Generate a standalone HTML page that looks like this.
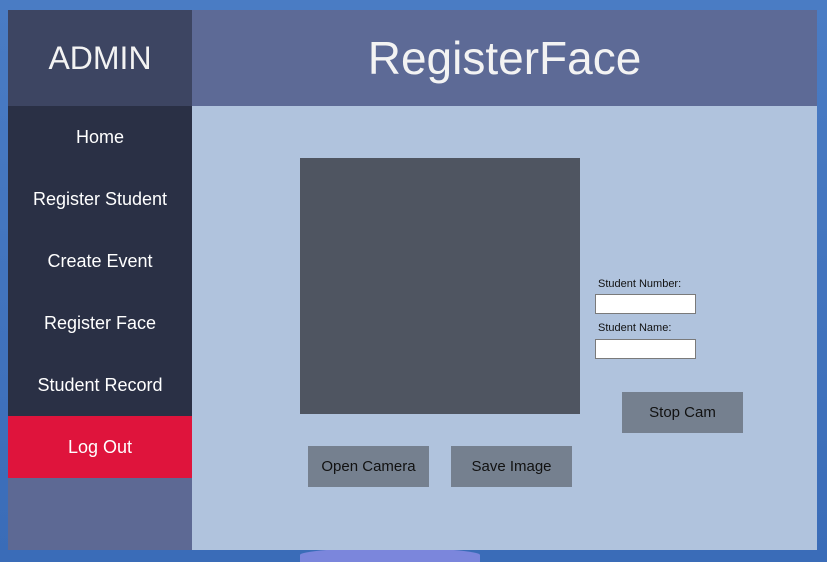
<!DOCTYPE html>
<html><head><style>
body{margin:0;width:827px;height:562px;overflow:hidden;background:linear-gradient(180deg,#4a7cc4 0%,#3a6cb8 100%);font-family:"Liberation Sans",sans-serif;position:relative}
.a{position:absolute}
.nav{position:absolute;left:8px;width:184px;height:62px;color:#fff;font-size:18px;text-align:center;line-height:62px;background:#2a3045}
.btn{position:absolute;background:#75808f;color:#111;font-size:15px;text-align:center;line-height:41px;width:121px;height:41px}
.lbl{position:absolute;font-size:11px;color:#111}
.tb{position:absolute;left:595px;width:99px;height:18px;background:#fff;border:1px solid #7a7a7a}
</style></head><body>
<div class="a" style="left:300px;top:548px;width:180px;height:14px;background:#7b86dc;border-radius:50% 50% 0 0"></div>
<div class="a" style="left:8px;top:10px;width:184px;height:96px;background:#3d4562;color:#f3f3f3;font-size:32px;text-align:center;line-height:96px">ADMIN</div>
<div class="a" style="left:192px;top:10px;width:625px;height:96px;background:#5d6a96;color:#f3f3f3;font-size:46px;text-align:center;line-height:96px">RegisterFace</div>
<div class="nav" style="top:106px">Home</div>
<div class="nav" style="top:168px">Register Student</div>
<div class="nav" style="top:230px">Create Event</div>
<div class="nav" style="top:292px">Register Face</div>
<div class="nav" style="top:354px">Student Record</div>
<div class="nav" style="top:416px;background:#df143c">Log Out</div>
<div class="a" style="left:8px;top:478px;width:184px;height:72px;background:#5d6994"></div>
<div class="a" style="left:192px;top:106px;width:625px;height:444px;background:#b0c3dd"></div>
<div class="a" style="left:300px;top:158px;width:280px;height:256px;background:#4f5561"></div>
<div class="lbl" style="left:598px;top:278px">Student Number:</div>
<div class="tb" style="top:294px"></div>
<div class="lbl" style="left:598px;top:322px">Student Name:</div>
<div class="tb" style="top:339px"></div>
<div class="btn" style="left:622px;top:392px">Stop Cam</div>
<div class="btn" style="left:308px;top:446px">Open Camera</div>
<div class="btn" style="left:451px;top:446px">Save Image</div>
</body></html>
